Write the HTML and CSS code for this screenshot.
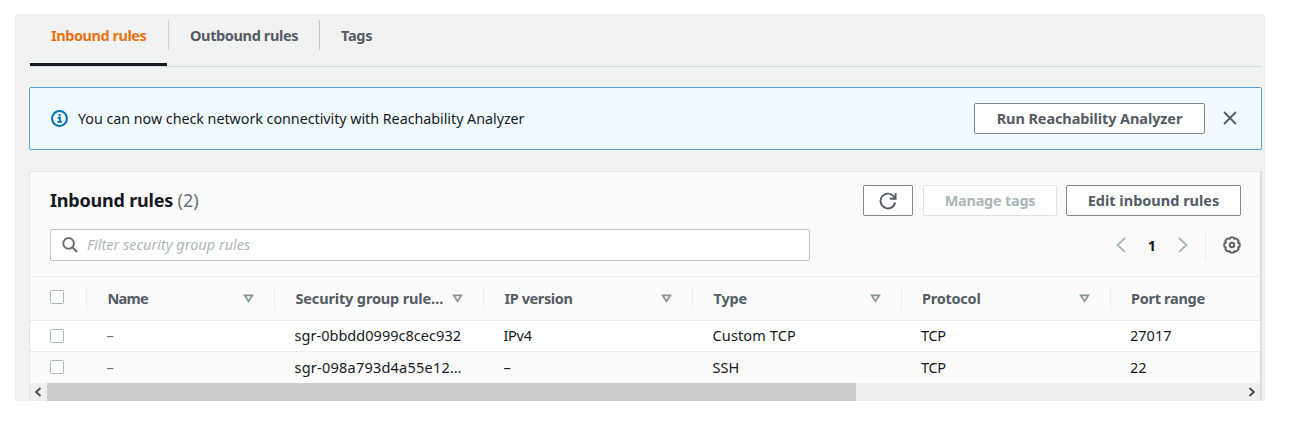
FILE: index.html
```html
<!DOCTYPE html>
<html lang="en">
<head>
<meta charset="utf-8">
<title>Inbound rules</title>
<link rel="stylesheet" href="styles.css">
</head>
<body>
<main class="page">
  <nav class="tabs">
    <a class="tab tab-active"><span class="t-inbound">Inbound rules</span></a>
    <a class="tab tab-outbound"><span class="t-outbound">Outbound rules</span></a>
    <a class="tab"><span class="t-tags">Tags</span></a>
  </nav>

  <section class="alert">
    <svg class="info" viewBox="0 0 16 16"><circle cx="8" cy="8" r="7" fill="none" stroke="#0073bb" stroke-width="1.9"/><path d="M6.3 7.3H8.4V11M6 11.2H10.3M7.1 4.7H9" fill="none" stroke="#0073bb" stroke-width="1.8"/></svg>
    <p class="alert-text">You can now check network connectivity with Reachability Analyzer</p>
    <button class="btn btn-run">Run Reachability Analyzer</button>
    <svg class="close" viewBox="0 0 14 14"><path d="M1 1L13 13M13 1L1 13" fill="none" stroke="#545b64" stroke-width="1.8"/></svg>
  </section>

  <section class="card">
    <header class="card-head">
      <h2 class="title">Inbound rules <span class="count">(2)</span></h2>
      <button class="btn btn-refresh"><svg class="refresh" viewBox="0 0 18 18"><path d="M16.2 10.5A7.4 7.4 0 1 1 14.6 4.2L16 6.2" fill="none" stroke="#545b64" stroke-width="1.9"/><path d="M16.6 1.2V6.8H10.8" fill="none" stroke="#545b64" stroke-width="1.9"/></svg></button>
      <button class="btn btn-manage" disabled>Manage tags</button>
      <button class="btn btn-edit">Edit inbound rules</button>
    </header>
    <div class="tools">
      <div class="search">
        <svg class="magnifier" viewBox="0 0 16 16"><circle cx="6.6" cy="6.4" r="5.3" fill="none" stroke="#687078" stroke-width="2"/><path d="M10.3 10.3L15 15" stroke="#687078" stroke-width="2.2"/></svg>
        <span class="placeholder">Filter security group rules</span>
      </div>
      <div class="pager">
        <svg class="chev" viewBox="0 0 10 16"><path d="M9 1L1.5 8L9 15" fill="none" stroke="#aab7b8" stroke-width="1.8"/></svg>
        <span class="page-no">1</span>
        <svg class="chev" viewBox="0 0 10 16"><path d="M1 1L8.5 8L1 15" fill="none" stroke="#aab7b8" stroke-width="1.8"/></svg>
      </div>
      <div class="settings">
        <svg class="gear" viewBox="0 0 18 18"><path d="M7.4 1.3H10.6L11.3 2.9L13.2 2.3L15.6 4.7L15 6.6L16.7 7.4V10.6L15 11.3L15.6 13.2L13.2 15.6L11.3 15L10.6 16.7H7.4L6.6 15L4.7 15.6L2.3 13.2L2.9 11.3L1.3 10.6V7.4L2.9 6.6L2.3 4.7L4.7 2.3L6.6 2.9Z" fill="none" stroke="#545b64" stroke-width="1.8" stroke-linejoin="round"/><circle cx="9" cy="9" r="2.3" fill="none" stroke="#545b64" stroke-width="1.8"/></svg>
      </div>
    </div>

    <div class="grid">
      <div class="row row-head">
        <div class="check"><i class="box"></i></div>
        <div class="th"><span class="h-name">Name</span><svg class="sort" viewBox="0 0 11 9"><path d="M1.6 1.3H9.4L5.5 7.3Z" fill="none" stroke="#879596" stroke-width="1.7"/></svg></div>
        <div class="th"><span class="h-sgr">Security group rule…</span><svg class="sort" viewBox="0 0 11 9"><path d="M1.6 1.3H9.4L5.5 7.3Z" fill="none" stroke="#879596" stroke-width="1.7"/></svg></div>
        <div class="th"><span class="h-ip">IP version</span><svg class="sort" viewBox="0 0 11 9"><path d="M1.6 1.3H9.4L5.5 7.3Z" fill="none" stroke="#879596" stroke-width="1.7"/></svg></div>
        <div class="th"><span class="h-type">Type</span><svg class="sort" viewBox="0 0 11 9"><path d="M1.6 1.3H9.4L5.5 7.3Z" fill="none" stroke="#879596" stroke-width="1.7"/></svg></div>
        <div class="th"><span class="h-proto">Protocol</span><svg class="sort" viewBox="0 0 11 9"><path d="M1.6 1.3H9.4L5.5 7.3Z" fill="none" stroke="#879596" stroke-width="1.7"/></svg></div>
        <div class="th"><span class="h-port">Port range</span></div>
      </div>
      <div class="row row-a">
        <div class="check"><i class="box"></i></div>
        <div class="td muted">–</div>
        <div class="td td-id">sgr-0bbdd0999c8cec932</div>
        <div class="td">IPv4</div>
        <div class="td td-custom">Custom TCP</div>
        <div class="td">TCP</div>
        <div class="td td-num">27017</div>
      </div>
      <div class="row row-b">
        <div class="check"><i class="box"></i></div>
        <div class="td muted">–</div>
        <div class="td td-id2">sgr-098a793d4a55e12…</div>
        <div class="td">–</div>
        <div class="td td-ssh">SSH</div>
        <div class="td">TCP</div>
        <div class="td td-num">22</div>
      </div>
    </div>
    <div class="scrollbar">
      <svg class="arrow" viewBox="0 0 8 10"><path d="M6.5 1L2.2 5L6.5 9" fill="none" stroke="#505050" stroke-width="2"/></svg>
      <div class="thumb"></div>
      <svg class="arrow arrow-right" viewBox="0 0 8 10"><path d="M1.5 1L5.8 5L1.5 9" fill="none" stroke="#505050" stroke-width="2"/></svg>
    </div>
  </section>
</main>
</body>
</html>
```
FILE: styles.css
```css
* { box-sizing: border-box; }
body {
  margin: 0;
  padding: 14px 47px 0 15px;
  background: #fff;
  font-family: "Noto Sans", "Open Sans", sans-serif;
  font-size: 14.5px;
  color: #16191f;
  overflow: hidden;
}
.page {
  width: 1250px;
  height: 387px;
  padding: 0 3px 0 14px;
  background: #f1f3f3;
  overflow: hidden;
}
span, p, h2, button, .td { white-space: nowrap; }

.tabs {
  display: flex;
  height: 53px;
  padding-top: 6px;
  border-bottom: 1px solid #d5dbdb;
  margin-left: 1px;
}
.tab {
  height: 30px;
  padding: 0 21px;
  line-height: 31px;
  font-weight: 700;
  color: #545b64;
}
.tab-active {
  height: 46px;
  width: 137px;
  border-bottom: 3px solid #16191f;
  color: #ec7211;
}
.tab-outbound {
  width: 152px;
  margin-left: 1px;
  border-left: 1px solid #c8d0d0;
  border-right: 1px solid #c3c8cc;
}
.t-inbound { letter-spacing: -0.45px; }
.t-outbound { letter-spacing: -0.37px; }
.t-tags { letter-spacing: -0.3px; }

.alert {
  display: flex;
  align-items: center;
  height: 63px;
  margin-top: 20px;
  padding: 0 24px 1px 21px;
  border: 1px solid #5ba3d3;
  border-radius: 2px;
  background: #f1faff;
}
.info { width: 17px; height: 17px; margin-top: 1px; }
.alert-text { margin: 0 auto 0 10px; font-size: 14.3px; letter-spacing: -0.03px; }
.close { width: 14px; height: 14px; margin-left: 18px; }

.btn {
  height: 31px;
  padding: 0;
  border: 1px solid #80868d;
  border-radius: 2px;
  background: #fff;
  color: #545b64;
  font: 700 14.5px/27px "Noto Sans", sans-serif;
  text-align: center;
}
.btn-run { width: 231px; letter-spacing: -0.1px; }
.btn-refresh { width: 50px; display: flex; align-items: center; justify-content: center; }
.btn-manage { width: 134px; margin-left: 10px; border-color: #dfe3e4; color: #aab7b8; letter-spacing: -0.25px; }
.btn-edit { width: 175px; margin-left: 9px; }
.refresh { width: 18px; height: 18px; }

.card {
  height: 231px;
  margin-top: 21px;
  border: 1px solid #e2e6e6;
  border-right: 2px solid #d9dfdf;
  border-bottom: 0;
  background: #fafafa;
}
.card-head {
  display: flex;
  align-items: center;
  height: 31px;
  margin: 13px 19px 0 20px;
}
.title { margin: 0 auto 0 0; font-size: 18px; line-height: 33px; font-weight: 700; letter-spacing: -0.2px; }
.count { font-weight: 400; color: #687078; letter-spacing: 0; }

.tools { display: flex; height: 32px; margin: 13px 19px 0 20px; }
.search {
  display: flex;
  align-items: center;
  width: 760px;
  flex: none;
  padding: 0 0 1px 11px;
  border: 1px solid #bcc6c7;
  border-radius: 2px;
  background: #fff;
}
.magnifier { width: 16px; height: 16px; }
.placeholder { margin-left: 9px; padding-bottom: 1px; font-style: italic; color: #aab7b8; }
.pager { display: flex; align-items: center; height: 31px; margin-left: 306px; width: 72px; }
.chev { width: 10px; height: 16px; flex: none; }
.page-no { width: 52px; text-align: center; font-weight: 700; }
.settings { display: flex; align-items: center; height: 31px; margin-left: auto; width: 36px; padding-left: 17px; border-left: 1px solid #eaeded; }
.gear { width: 18px; height: 18px; flex: none; }

.grid { margin-top: 15px; border-top: 1px solid #eaeded; }
.row {
  display: grid;
  grid-template-columns: 56px 188px 209px 209px 208.5px 209px 1fr;
  align-items: center;
}
.row-head { height: 44px; border-bottom: 1px solid #eaeded; }
.row-a { height: 31px; background: #fff; border-bottom: 1px solid #eaeded; }
.row-b { height: 31px; }
.check { padding-left: 20px; }
.box {
  display: block;
  width: 14px;
  height: 14px;
  margin-top: -3px;
  border: 1px solid #aab7b8;
  border-radius: 1.5px;
  background: #fff;
}
.row-a .box, .row-b .box { margin-top: -1px; }
.th {
  display: flex;
  align-items: center;
  height: 22px;
  padding: 0 20px 0 20.5px;
  border-left: 1px solid #eaeded;
  font-weight: 700;
  color: #545b64;
}
.th span { margin-top: -2px; }
.h-name { letter-spacing: -0.7px; }
.h-sgr { letter-spacing: -0.15px; }
.h-ip { letter-spacing: -0.4px; }
.h-type { letter-spacing: -0.2px; }
.h-proto { letter-spacing: -0.25px; }
.h-port { letter-spacing: -0.3px; }
.sort { width: 11px; height: 9px; margin-left: auto; flex: none; }
.td { margin-top: -2px; padding-left: 20.5px; line-height: 28px; letter-spacing: -0.3px; }
.td-id { letter-spacing: 0.03px; }
.td-id2 { letter-spacing: 0.23px; }
.td-custom { letter-spacing: 0.13px; }
.td-ssh { letter-spacing: 0.1px; }
.td-num { letter-spacing: 0; }
.muted { color: #687078; }

.scrollbar {
  display: flex;
  align-items: center;
  height: 18px;
  background: #eeefef;
}
.arrow { width: 8px; height: 10px; margin-left: 4px; }
.thumb { width: 809px; height: 18px; margin-left: 5px; background: #cdcdcd; }
.arrow-right { margin-left: auto; margin-right: 4px; }
```
